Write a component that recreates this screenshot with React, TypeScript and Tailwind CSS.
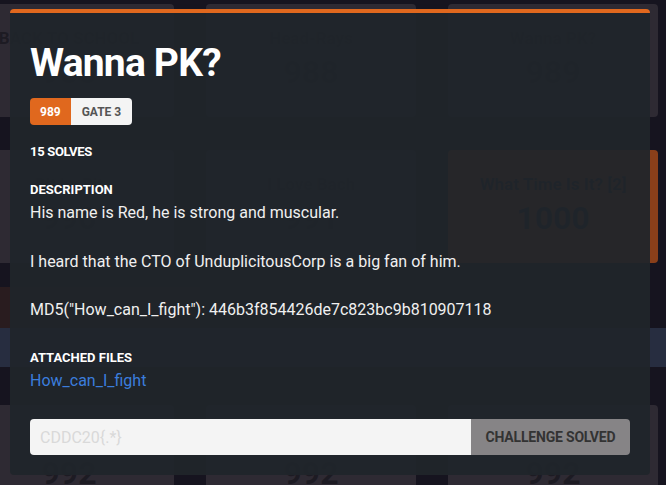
import React from 'react';

type Chal = { name: string; value: number; solved?: boolean };

const rowOne: Chal[] = [
  { name: 'BACK TO SCHOOL', value: 988 },
  { name: 'Head-Rays', value: 988 },
  { name: 'Wanna PK?', value: 989 },
];

const rowTwo: Chal[] = [
  { name: 'Bit by Bit', value: 990 },
  { name: 'I Love Bach', value: 991 },
  { name: 'What Time Is It? [2]', value: 1000, solved: true },
];

const rowThree: Chal[] = [
  { name: 'Pwn Me', value: 992 },
  { name: 'Crackme', value: 992 },
  { name: 'Stego', value: 992 },
];

const ChallengeCard: React.FC<{ chal: Chal }> = ({ chal }) => (
  <div
    className={`w-[210px] h-[113px] rounded-[4px] flex flex-col items-center pt-[24px] ${
      chal.solved ? 'bg-[#8a3f1a]' : 'bg-[#2e2a33]'
    }`}
  >
    <div className="text-[17px] leading-[20px] font-bold text-[#1d1b23] whitespace-nowrap">{chal.name}</div>
    <div className="text-[32px] leading-[40px] mt-[4px] font-bold text-[#1d1b23]">{chal.value}</div>
  </div>
);

const CardRow: React.FC<{ items: Chal[] }> = ({ items }) => (
  <div className="flex gap-[32px] ml-[-36px]">
    {items.map((c) => (
      <ChallengeCard key={c.name} chal={c} />
    ))}
  </div>
);

export default function App() {
  return (
    <div className="relative w-[666px] h-[485px] overflow-hidden bg-[#16141f] font-['Roboto',sans-serif]">
      {/* board behind the modal */}
      <div className="flex flex-col pt-[4px]">
        <CardRow items={rowOne} />
        <div className="mt-[33px]">
          <CardRow items={rowTwo} />
        </div>
        <div className="h-[142px] flex flex-col">
          <div className="h-[24px]" />
          <div className="h-[41px] w-[200px] bg-[#291c1f]" />
          <div className="h-[39px] bg-[#272d40]" />
        </div>
        <CardRow items={rowThree} />
      </div>

      {/* challenge modal */}
      <div className="absolute left-[10px] top-[9px] w-[640px] h-[466px] rounded-[4px] border-t-4 border-[#e0681e] bg-[#20252a]/[0.94] px-[20px] pt-[26px] pb-[20px] text-white">
        <h1 className="text-[39px] leading-[48px] font-bold tracking-[-0.8px]">Wanna PK?</h1>

        <div className="mt-[11px] flex h-[27px] w-fit rounded-[4px] overflow-hidden text-[12px] font-bold">
          <span className="flex items-center bg-[#e0681e] px-[10px] text-white">989</span>
          <span className="flex items-center bg-[#f4f4f4] px-[11px] text-[#555555]">GATE 3</span>
        </div>

        <div className="mt-[17px] text-[13px] leading-[20px] font-bold tracking-[-0.3px]">15 SOLVES</div>

        <div className="mt-[18px] text-[13px] leading-[20px] font-bold">DESCRIPTION</div>
        <div className="mt-[1px] text-[16px] leading-[24px] text-[#f0f0f0]">
          <p>His name is Red, he is strong and muscular.</p>
          <p className="mt-[25px]">I heard that the CTO of UnduplicitousCorp is a big fan of him.</p>
          <p className="mt-[24px]">MD5(&quot;How_can_I_fight&quot;): 446b3f854426de7c823bc9b810907118</p>
        </div>

        <div className="mt-[26px] text-[13px] leading-[20px] font-bold">ATTACHED FILES</div>
        <a className="mt-[1px] block text-[16px] leading-[24px] text-[#3b7ddc]">How_can_I_fight</a>

        <div className="mt-[26px] flex h-[36px]">
          <input
            disabled
            placeholder="CDDC20{.*}"
            className="w-[441px] h-full rounded-l-[4px] bg-[#f4f4f4] px-[10px] text-[16px] text-[#333] placeholder:text-[#d9d9d9] outline-none"
          />
          <button className="flex-1 h-full rounded-r-[4px] bg-[#868486] text-[14px] font-bold text-[#333333] tracking-[-0.2px]">
            CHALLENGE SOLVED
          </button>
        </div>
      </div>
    </div>
  );
}
